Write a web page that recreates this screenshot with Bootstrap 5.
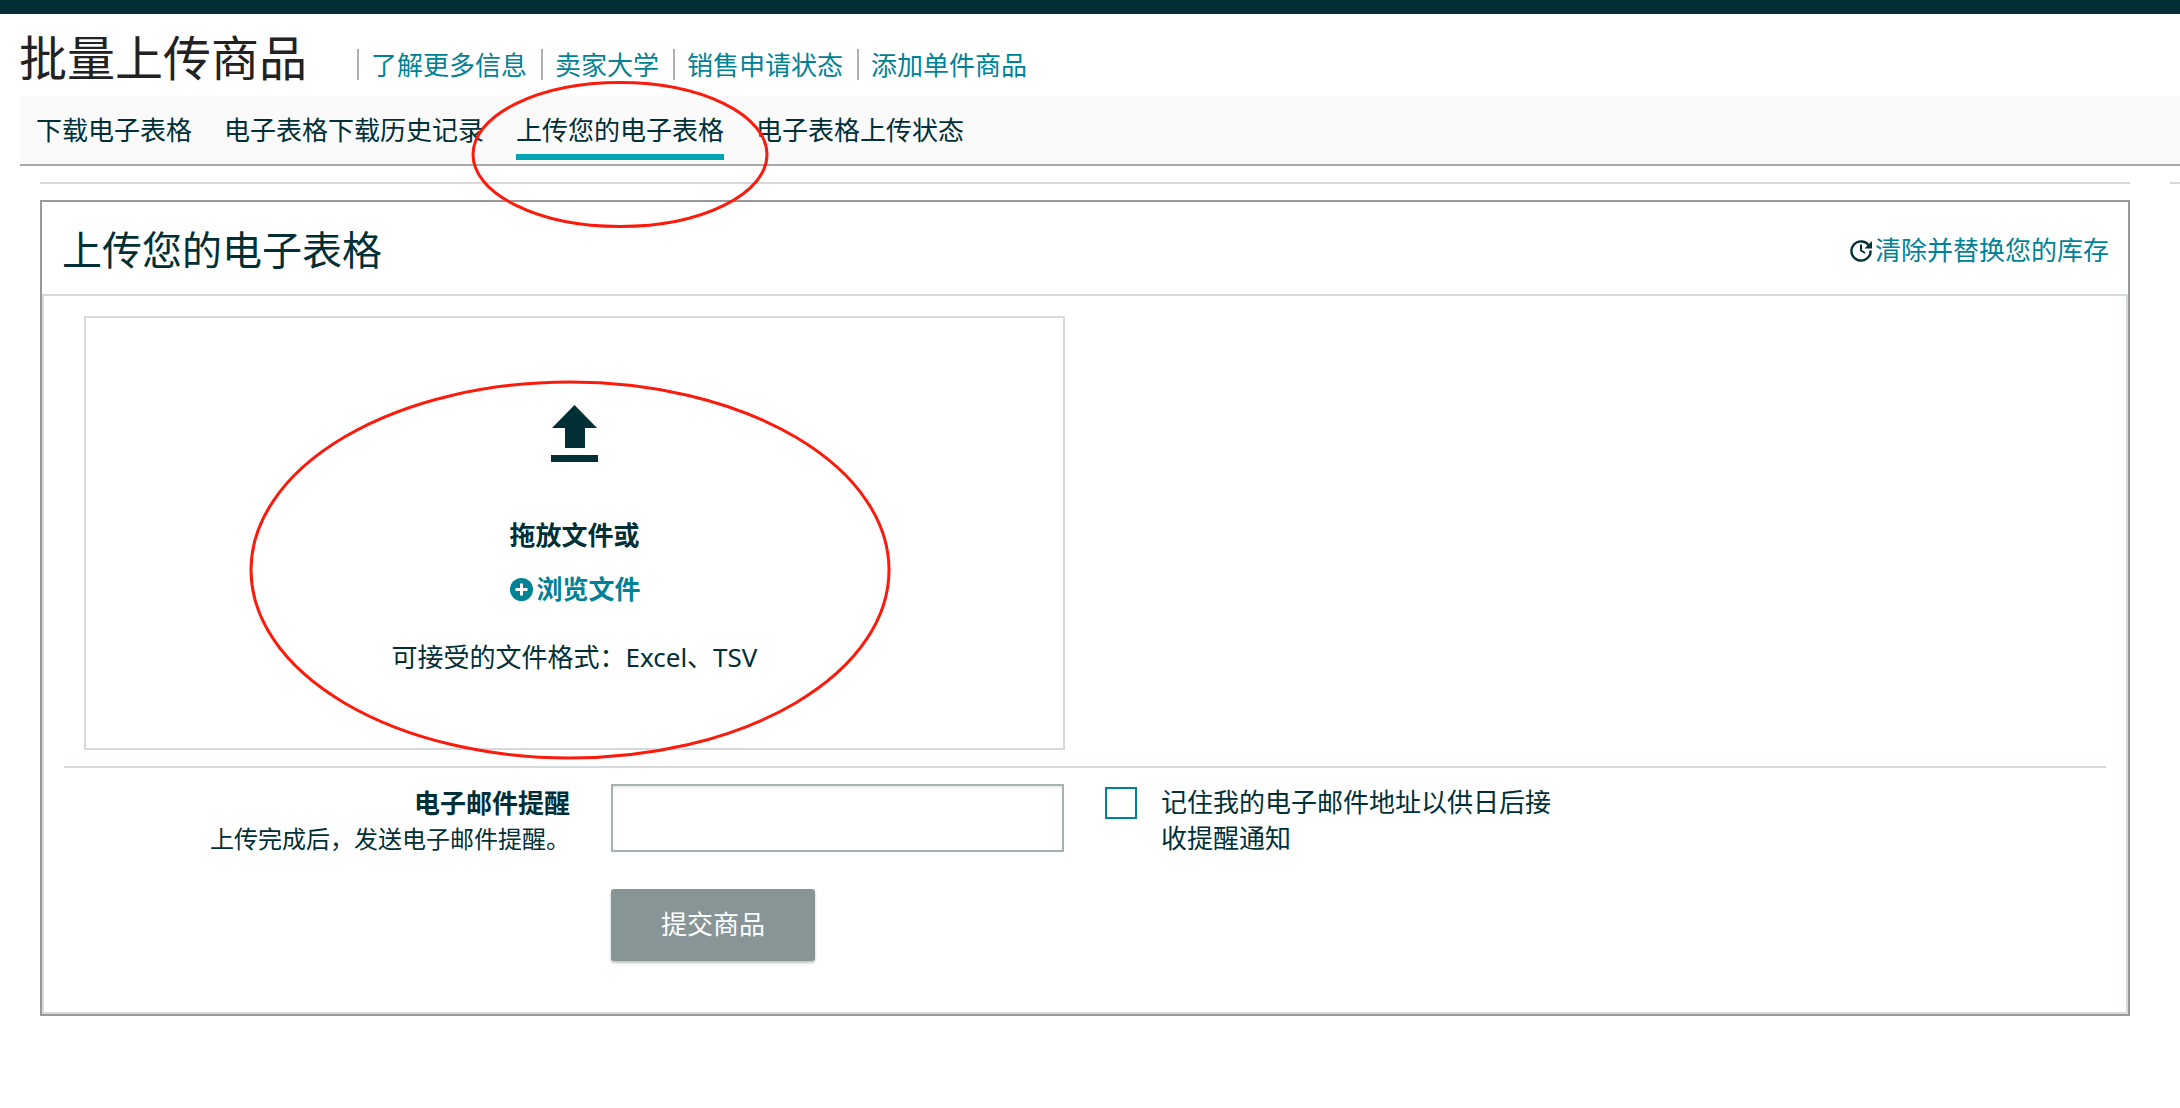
<!doctype html>
<html lang="zh-CN">
<head>
<meta charset="utf-8">
<title>批量上传商品</title>
<link href="https://cdn.jsdelivr.net/npm/bootstrap@5.3.0/dist/css/bootstrap.min.css" rel="stylesheet">
<style>
html,body{background:#fff}
body{margin:0;font-family:"Noto Sans","Noto Sans CJK SC",sans-serif;font-size:26px;line-height:36px;color:#002f36;position:relative;min-height:1108px;overflow:hidden}
a{text-decoration:none;color:#008296}
.top-strip{height:14px;background:#002f36}
.page-head{height:82px;padding-left:19px}
.page-title{font-size:48px;line-height:60px;margin:14px 0 0;font-weight:400;color:#222;width:338px;flex:none}
.head-links{margin-top:35px;height:31px}
.head-links a{display:block;line-height:33px;padding:0 14px 0 12px;border-left:2px solid #a9b0b0}
.tab-bar{margin-left:20px;height:70px;background:#fafafa;border-bottom:2px solid #aaa;padding-left:16px;gap:32px}
.tab-bar .nav-link{padding:16px 0 0;height:64px;line-height:36px;color:#002f36;font-size:26px;border-bottom:6px solid transparent;white-space:nowrap}
.tab-bar .nav-link.active{border-bottom-color:#00a4b4;box-sizing:border-box}
.rule-row{margin:16px 0;height:2px;gap:40px;padding-left:40px}
.rule-a{width:2090px;background:#d5dbdb}
.rule-b{flex:1;background:#d5dbdb}
.panel-box{margin-left:40px;width:2090px;height:816px;border:2px solid #999;border-radius:0;background:#fff;color:#002f36}
.panel-top{height:92px;padding:4px 19px 0 20px;background:#fff;border:0;border-radius:0!important}
.panel-top h2{font-size:40px;line-height:52px;margin:0;font-weight:400}
.panel-top a svg{margin-right:2px}
.panel-inner{border:2px solid #d5dbdb;padding:20px 20px 0;flex:1;min-height:0}
.drop-box{margin-left:20px;width:981px;height:434px;border:2px solid #d5dbdb;padding-top:87px}
.drop-box svg{display:block}
.drop-title{font-weight:700;margin-top:54px;line-height:36px}
.drop-link{font-weight:700;margin-top:18px;line-height:36px;gap:3px;padding-left:2px}
.drop-note{margin-top:32px;line-height:36px}
.split{border-top:2px solid #d5dbdb;margin-top:16px}
.mail-row{padding-top:16px}
.mail-label{width:506px;flex:none;text-align:right;padding-top:1px}
.mail-label strong{display:block;line-height:36px}
.mail-label span{display:block;font-size:24px;line-height:36px}
.mail-input.form-control{width:453px;height:68px;margin-left:41px;border:2px solid #a6b2b2;border-radius:0;box-shadow:inset 0 2px 2px rgba(0,0,0,.08);flex:none}
.mail-check{margin-left:41px;padding-top:3px;gap:24px}
.mail-check .form-check-input{width:32px;height:32px;margin:0;border:2px solid #008296;border-radius:0;flex:none;float:none}
.mail-check label{width:400px;line-height:36px;margin-top:-3px}
.send-btn.btn{display:block;margin:32px 0 0 547px;width:204px;height:72px;background:#879596;border:0;border-radius:3px;color:#fff;font-size:26px;line-height:36px;box-shadow:0 2px 3px rgba(0,0,0,.25);padding:0 0 2px;opacity:1}
.mark-layer{position:absolute;left:0;top:0;pointer-events:none}
</style>
</head>
<body>
<div class="top-strip"></div>
<div class="page-head d-flex">
  <h1 class="page-title">批量上传商品</h1>
  <div class="head-links d-flex">
    <a href="#">了解更多信息</a><a href="#">卖家大学</a><a href="#">销售申请状态</a><a href="#">添加单件商品</a>
  </div>
</div>
<ul class="nav tab-bar">
  <li class="nav-item"><a class="nav-link" href="#">下载电子表格</a></li>
  <li class="nav-item"><a class="nav-link" href="#">电子表格下载历史记录</a></li>
  <li class="nav-item"><a class="nav-link active" href="#">上传您的电子表格</a></li>
  <li class="nav-item"><a class="nav-link" href="#">电子表格上传状态</a></li>
</ul>
<div class="rule-row d-flex"><div class="rule-a"></div><div class="rule-b"></div></div>
<div class="card panel-box">
  <div class="card-header panel-top d-flex justify-content-between align-items-center">
    <h2>上传您的电子表格</h2>
    <a href="#" class="d-flex align-items-center">
      <svg width="24" height="24" viewBox="0 0 24 24" fill="none" aria-hidden="true"><path d="M20.5 8.5A9.6 9.6 0 1 0 21.6 12.500" stroke="#002f36" stroke-width="2.400"/><path d="M23 3v7.500h-7.500z" fill="#002f36"/><path d="M12 6.500v6l4 2.500" stroke="#002f36" stroke-width="2"/></svg>
      <span>清除并替换您的库存</span>
    </a>
  </div>
  <div class="panel-inner">
    <div class="drop-box text-center">
      <svg class="mx-auto" width="48" height="58" viewBox="0 0 48 58" aria-hidden="true"><path d="M23.500 0 46 23H34v20H14V23H1z" fill="#002f36"/><rect y="50" width="47" height="7" fill="#002f36"/></svg>
      <div class="drop-title">拖放文件或</div>
      <a href="#" class="drop-link d-flex justify-content-center align-items-center">
        <svg width="23" height="23" viewBox="0 0 23 23" aria-hidden="true"><circle cx="11.500" cy="11.500" r="11.500" fill="#008296"/><path d="M11.500 5.500v12M5.500 11.500h12" stroke="#fff" stroke-width="3"/></svg>
        <span>浏览文件</span>
      </a>
      <div class="drop-note">可接受的文件格式：Excel、TSV</div>
    </div>
    <div class="split"></div>
    <div class="mail-row d-flex">
      <div class="mail-label"><strong>电子邮件提醒</strong><span>上传完成后，发送电子邮件提醒。</span></div>
      <input class="form-control mail-input" type="text" aria-label="电子邮件提醒">
      <div class="mail-check d-flex">
        <input class="form-check-input" type="checkbox" id="remember">
        <label for="remember">记住我的电子邮件地址以供日后接收提醒通知</label>
      </div>
    </div>
    <button class="btn send-btn" type="button">提交商品</button>
  </div>
</div>
<svg class="mark-layer" width="2180" height="1108" viewBox="0 0 2180 1108" fill="none" aria-hidden="true">
  <ellipse cx="620" cy="154.500" rx="147" ry="72" stroke="#fb1a0c" stroke-width="3"/>
  <ellipse cx="570" cy="570" rx="319" ry="188" stroke="#fb1a0c" stroke-width="3"/>
</svg>
</body>
</html>
